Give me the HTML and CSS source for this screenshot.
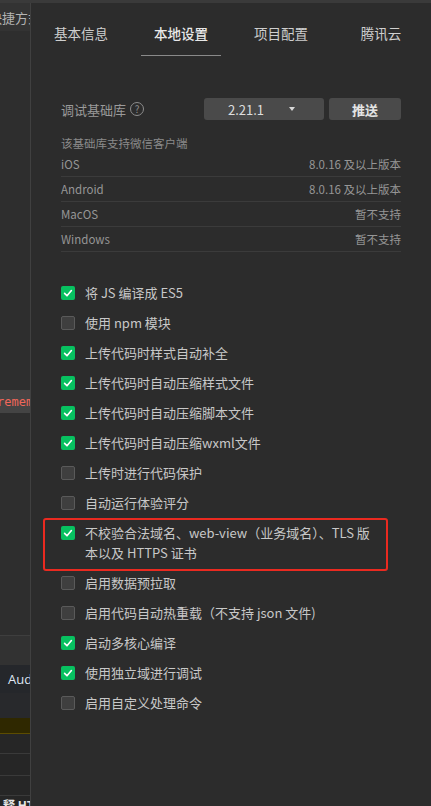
FILE: index.html
```html
<!DOCTYPE html>
<html lang="zh-CN">
<head>
  <meta charset="UTF-8">
  <meta name="viewport" content="width=device-width, initial-scale=1.0">
  <title>本地设置</title>
  <link rel="stylesheet" href="styles.css">
</head>
<body>

<div class="topbar"></div>

<div class="shell">
  <!-- 左侧被遮住的编辑器区域 -->
  <aside class="side">
    <div class="side-head"><span>快捷方式</span></div>
    <div class="side-fill fill-a"></div>
    <div class="side-code"><span>rememb</span></div>
    <div class="side-fill fill-b"></div>
    <div class="side-tab"></div>
    <div class="side-aud">Aud</div>
    <div class="side-row"></div>
    <div class="side-warn"></div>
    <div class="side-line h19"></div>
    <div class="side-line h21"></div>
    <div class="side-line h19"></div>
    <div class="side-foot">释 HT</div>
  </aside>

  <!-- 详情面板 -->
  <main class="panel">
    <nav class="tabs">
      <div class="tab">基本信息</div>
      <div class="tab active">本地设置</div>
      <div class="tab">项目配置</div>
      <div class="tab">腾讯云</div>
    </nav>

    <section class="lib">
      <div class="lib-row">
        <span class="lib-label">调试基础库</span>
        <span class="help">?</span>
        <div class="select">
          <span>2.21.1</span>
          <i class="caret"></i>
        </div>
        <button class="push">推送</button>
      </div>
      <p class="lib-desc">该基础库支持微信客户端</p>
      <div class="os-row"><span>iOS</span><span>8.0.16 及以上版本</span></div>
      <div class="os-row"><span>Android</span><span>8.0.16 及以上版本</span></div>
      <div class="os-row"><span>MacOS</span><span>暂不支持</span></div>
      <div class="os-row"><span>Windows</span><span>暂不支持</span></div>
    </section>

    <ul class="options">
      <li class="opt on"><span class="box"></span><span class="txt">将 JS 编译成 ES5</span></li>
      <li class="opt"><span class="box"></span><span class="txt">使用 npm 模块</span></li>
      <li class="opt on"><span class="box"></span><span class="txt">上传代码时样式自动补全</span></li>
      <li class="opt on"><span class="box"></span><span class="txt">上传代码时自动压缩样式文件</span></li>
      <li class="opt on"><span class="box"></span><span class="txt">上传代码时自动压缩脚本文件</span></li>
      <li class="opt on"><span class="box"></span><span class="txt">上传代码时自动压缩wxml文件</span></li>
      <li class="opt"><span class="box"></span><span class="txt">上传时进行代码保护</span></li>
      <li class="opt"><span class="box"></span><span class="txt">自动运行体验评分</span></li>
      <li class="opt on marked"><span class="box"></span><span class="txt">不校验合法域名、web-view（业务域名）、TLS 版本以及 HTTPS 证书</span></li>
      <li class="opt"><span class="box"></span><span class="txt">启用数据预拉取</span></li>
      <li class="opt"><span class="box"></span><span class="txt">启用代码自动热重载（不支持 json 文件)</span></li>
      <li class="opt on"><span class="box"></span><span class="txt">启动多核心编译</span></li>
      <li class="opt on"><span class="box"></span><span class="txt">使用独立域进行调试</span></li>
      <li class="opt"><span class="box"></span><span class="txt">启用自定义处理命令</span></li>
    </ul>
  </main>
</div>

</body>
</html>
```

FILE: styles.css
```css
/* 页面基础 */
body {
  margin: 0;
  height: 806px;
  overflow: hidden;
  background: #2c2c2c;
  font-family: "Noto Sans CJK SC", "Noto Sans", sans-serif;
  color: #cccccc;
}

.topbar {
  height: 3px;
  background: #3a3a3a;
}

.shell {
  display: flex;
  height: 803px;
}

/* 左侧编辑器残影 */
.side {
  width: 30px;
  flex: none;
  display: flex;
  flex-direction: column;
  overflow: hidden;
  background: #2e2e2e;
}
.side > * {
  flex: none; /* 固定高度，不被压缩 */
}
.side-head {
  height: 28px;
  background: #333333;
  display: flex;
  align-items: center;
  font-size: 13px;
  color: #b4b4b4;
  white-space: nowrap;
}
.side-head span {
  margin-left: -11px;
}
.fill-a { height: 359px; }
.fill-b { height: 222px; }
.side-code {
  height: 23px;
  background: #444444;
  display: flex;
  align-items: center;
  font-family: "DejaVu Sans Mono", monospace;
  font-size: 12px;
  color: #f0675a;
  white-space: nowrap;
}
.side-code span {
  margin-left: -3px;
}
.side-tab {
  height: 29px;
  border-top: 1px solid #3e3e3e;
  background: #323232;
}
.side-aud {
  height: 28px;
  background: #25272b;
  font-family: "Open Sans", sans-serif;
  font-size: 13px;
  line-height: 28px;
  color: #dfe6f2;
  padding-left: 8px;
}
.side-row {
  height: 25px;
  background: #28292c;
}
.side-warn {
  height: 15px;
  background: #2f2800;
  border-bottom: 1px solid #5c4c00;
}
.side-line {
  background: #262626;
  border-bottom: 1px solid #3a3a3a;
}
.h19 { height: 19px; }
.h21 { height: 21px; }
.side-foot {
  flex: 1;
  min-height: 0;
  background: #262626;
  font-size: 12px;
  font-weight: bold;
  color: #e6e6e6;
  line-height: 18px;
  white-space: nowrap;
  padding-left: 3px;
}

/* 右侧面板 */
.panel {
  flex: 1;
  border-left: 1px solid #404040;
  background: #2c2c2c;
}

.tabs {
  display: flex;
}
.tab {
  width: 100px;
  display: flex;
  justify-content: center;
  padding: 20px 0 0;
  height: 33px;
  font-size: 13.5px;
  line-height: 20px;
  color: #cfcfcf;
}
.tab.active {
  color: #e8e8e8;
  font-weight: 500;
  box-shadow: inset 0 -1px 0 #8a8a8a;
  width: 80px;
  margin: 0 10px;
}

/* 基础库 */
.lib {
  padding: 42px 30px 0;
}
.lib-row {
  display: flex;
  align-items: center;
  height: 22px;
}
.lib-label {
  font-size: 13px;
  color: #9a9a9a;
}
.help {
  width: 12px;
  height: 12px;
  margin-left: 4px;
  border: 1px solid #8c8c8c;
  border-radius: 50%;
  font-size: 10px;
  line-height: 12px;
  text-align: center;
  color: #8c8c8c;
}
.select {
  margin-left: auto;
  width: 120px;
  height: 22px;
  box-sizing: border-box;
  padding: 0 29px 0 24px;
  background: #4a4a4a;
  border-radius: 3px;
  display: flex;
  align-items: center;
  justify-content: space-between;
  font-size: 13px;
  color: #dedede;
}
.caret {
  width: 0;
  height: 0;
  border-left: 3px solid transparent;
  border-right: 3px solid transparent;
  border-top: 4px solid #d8d8d8;
}
.push {
  margin-left: 5px;
  width: 72px;
  height: 22px;
  border: none;
  border-radius: 3px;
  background: #4a4a4a;
  font-family: inherit;
  font-size: 13px;
  font-weight: bold;
  color: #e4e4e4;
  padding: 0;
}
.lib-desc {
  margin: 14px 0 0;
  font-size: 11.5px;
  line-height: 18px;
  color: #8a8a8a;
}
.os-row {
  display: flex;
  justify-content: space-between;
  align-items: center;
  height: 24px;
  border-bottom: 1px solid #3b3b3b;
  font-size: 11.5px;
  color: #969696;
}

/* 复选项 */
.options {
  list-style: none;
  margin: 26px 0 0;
  padding: 0 30px;
}
.opt {
  position: relative;
  display: flex;
  align-items: flex-start;
  gap: 10px;
  padding: 5px 0;
  font-size: 13px;
  line-height: 20px;
  color: #c8c8c8;
}
.box {
  flex: none;
  width: 14px;
  height: 14px;
  margin-top: 3px;
  box-sizing: border-box;
  border: 1px solid #5a5a5a;
  border-radius: 2px;
  background: #3f3f3f;
}
.opt.on .box {
  border: none;
  background: #07c160 url("data:image/svg+xml;utf8,<svg xmlns='http://www.w3.org/2000/svg' viewBox='0 0 14 14'><polyline points='3.6,7.4 6,9.8 10.4,4.6' fill='none' stroke='white' stroke-width='1.6' stroke-linecap='round' stroke-linejoin='round'/></svg>") center / 14px 14px no-repeat;
}
/* 红框标注 */
.opt.marked .txt {
  max-width: 292px;
}
.opt.marked::after {
  content: "";
  position: absolute;
  top: 0;
  left: -18px;
  right: 13px;
  bottom: -3px;
  border: 2px solid #ea2a20;
  border-radius: 3px;
}
```
